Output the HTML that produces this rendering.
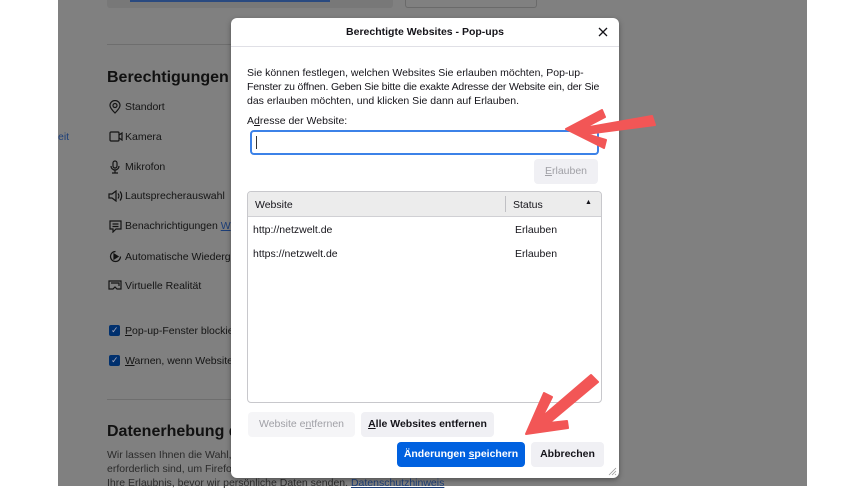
<!DOCTYPE html>
<html><head><meta charset="utf-8"><style>
*{margin:0;padding:0;box-sizing:border-box}
body{width:864px;height:486px;overflow:hidden;background:#fff;font-family:"Liberation Sans",sans-serif;position:relative}
.a{position:absolute;white-space:nowrap}
#bg{position:absolute;left:58px;top:0;width:749px;height:486px;background:#808080}
.t{color:#141414;font-size:10.5px}
.dlg{position:absolute;left:231px;top:18px;width:388px;height:460px;background:#fff;border-radius:6px;box-shadow:0 2px 6px rgba(0,0,0,.35)}
.d{color:#15141a;font-size:10.5px}
.btn{position:absolute;height:25px;border-radius:4px;background:#f0f0f4;font-size:10.5px;text-align:center;line-height:25px;font-weight:bold;color:#15141a}
svg.i{position:absolute}
</style></head><body>
<div id="bg"></div>
<div class="a" style="left:107px;top:0;width:286px;height:8px;background:#787878;border-radius:0 0 3px 3px"></div>
<div class="a" style="left:130px;top:0;width:200px;height:2px;background:#2a4a80"></div>
<div class="a" style="left:405px;top:0;width:132px;height:8px;border:1px solid #6a6a6a;border-top:none;border-radius:0 0 3px 3px"></div>
<div class="a" style="left:107px;top:44px;width:124px;height:1px;background:#6e6e6e"></div>
<div class="a" style="left:107px;top:69px;font-size:16px;font-weight:bold;color:#111">Berechtigungen</div>
<div class="a" style="left:58px;top:131px;font-size:10.5px;color:#1c3e78">eit</div>
<svg class="i" style="left:109px;top:100px" width="12" height="14" viewBox="0 0 12 14" fill="none" stroke="#141414" stroke-width="1.2"><path d="M6 13C2 9 1 7 1 5.5a5 5 0 0110 0C11 7 10 9 6 13z"/><circle cx="6" cy="5.5" r="2"/></svg>
<div class="a t" style="left:125px;top:101px">Standort</div>
<svg class="i" style="left:109px;top:131px" width="14" height="11" viewBox="0 0 14 11" fill="none" stroke="#141414" stroke-width="1.2"><rect x="1" y="1" width="9" height="9" rx="1"/><path d="M10 4l3-2v7l-3-2"/></svg>
<div class="a t" style="left:125px;top:131px">Kamera</div>
<svg class="i" style="left:110px;top:160px" width="10" height="14" viewBox="0 0 10 14" fill="none" stroke="#141414" stroke-width="1.2"><rect x="3" y="1" width="4" height="7" rx="2"/><path d="M1 6a4 4 0 008 0M5 10v3M2 13h6"/></svg>
<div class="a t" style="left:125px;top:161px">Mikrofon</div>
<svg class="i" style="left:108px;top:190px" width="15" height="12" viewBox="0 0 15 12" fill="none" stroke="#141414" stroke-width="1.2"><path d="M1 4h3l4-3v10l-4-3H1z"/><path d="M10 3.5a4 4 0 010 5M12 1.5a7 7 0 010 9"/></svg>
<div class="a t" style="left:125px;top:190px">Lautsprecherauswahl</div>
<svg class="i" style="left:109px;top:220px" width="13" height="13" viewBox="0 0 13 13" fill="none" stroke="#141414" stroke-width="1.2"><path d="M1 1h11v8H7l-3 3V9H1z"/><path d="M3.5 4h6M3.5 6.5h6"/></svg>
<div class="a t" style="left:125px;top:220px">Benachrichtigungen <span style="color:#1c3e78;text-decoration:underline">W</span></div>
<svg class="i" style="left:109px;top:250px" width="13" height="13" viewBox="0 0 13 13" fill="none" stroke="#141414" stroke-width="1.2"><path d="M11.5 6.5A5 5 0 116.5 1.5"/><path d="M5 4l4 2.5L5 9z" fill="#141414"/></svg>
<div class="a t" style="left:125px;top:251px">Automatische Wiederg</div>
<svg class="i" style="left:108px;top:280px" width="14" height="11" viewBox="0 0 14 11" fill="none" stroke="#141414" stroke-width="1.2"><path d="M1 1h12v8H9l-2-2-2 2H1z"/><path d="M3 3h8v3"/></svg>
<div class="a t" style="left:125px;top:280px">Virtuelle Realität</div>
<div class="a" style="left:109px;top:325px;width:11px;height:11px;background:#00306e;border-radius:2px"></div>
<div class="a" style="left:111px;top:325px;color:#aab;font-size:9px">✓</div>
<div class="a t" style="left:125px;top:325px"><u>P</u>op-up-Fenster blockie</div>
<div class="a" style="left:109px;top:355px;width:11px;height:11px;background:#00306e;border-radius:2px"></div>
<div class="a" style="left:111px;top:355px;color:#aab;font-size:9px">✓</div>
<div class="a t" style="left:125px;top:355px"><u>W</u>arnen, wenn Website</div>
<div class="a" style="left:107px;top:399px;width:124px;height:1px;background:#6e6e6e"></div>
<div class="a" style="left:107px;top:423px;font-size:16px;font-weight:bold;color:#111">Datenerhebung du</div>
<div class="a t" style="left:107px;top:449px;color:#2a2a2a">Wir lassen Ihnen die Wahl,</div>
<div class="a t" style="left:107px;top:463px;color:#2a2a2a">erforderlich sind, um Firefo</div>
<div class="a t" style="left:107px;top:477px;color:#2a2a2a">Ihre Erlaubnis, bevor wir persönliche Daten senden. <span style="color:#1c3e78;text-decoration:underline">Datenschutzhinweis</span></div>

<div class="dlg">
  <div class="a" style="left:0;width:388px;text-align:center;top:8px;font-size:10.5px;font-weight:bold;color:#15141a">Berechtigte Websites - Pop-ups</div>
  <svg class="i" style="left:367px;top:9px" width="10" height="10" viewBox="0 0 10 10" stroke="#15141a" stroke-width="1.3"><path d="M1 1l8 8M9 1L1 9"/></svg>
  <div class="a" style="left:0;top:28px;width:388px;height:1px;background:#e0e0e6"></div>
  <div class="a d" style="left:16px;top:48px;line-height:14px">Sie können festlegen, welchen Websites Sie erlauben möchten, Pop-up-<br><span style="letter-spacing:-0.18px">Fenster zu öffnen. Geben Sie bitte die exakte Adresse der Website ein, der Sie</span><br>das erlauben möchten, und klicken Sie dann auf Erlauben.</div>
  <div class="a d" style="left:16px;top:97px">A<u>d</u>resse der Website:</div>
  <div class="a" style="left:19px;top:112px;width:349px;height:25px;border:2px solid #3c82e8;border-radius:4px"></div>
  <div class="a" style="left:25px;top:118px;width:1px;height:13px;background:#333"></div>
  <div class="btn" style="left:303px;top:141px;width:64px;color:#a0a0a6;font-weight:normal"><u>E</u>rlauben</div>
  <div class="a" style="left:16px;top:173px;width:355px;height:212px;border:1px solid #c8c8cc;border-radius:4px;overflow:hidden">
    <div class="a" style="left:0;top:0;width:355px;height:25px;background:#ececec;border-bottom:1px solid #d0d0d4"></div>
    <div class="a" style="left:257px;top:4px;width:1px;height:16px;background:#c0c0c4"></div>
    <div class="a d" style="left:7px;top:7px">Website</div>
    <div class="a d" style="left:265px;top:7px">Status</div>
    <div class="a" style="left:337px;top:7px;font-size:7px;color:#15141a">▲</div>
    <div class="a d" style="left:5px;top:32px">http://netzwelt.de</div>
    <div class="a d" style="left:267px;top:32px">Erlauben</div>
    <div class="a d" style="left:5px;top:56px">https://netzwelt.de</div>
    <div class="a d" style="left:267px;top:56px">Erlauben</div>
  </div>
  <div class="btn" style="left:17px;top:394px;width:107px;color:#a0a0a6;font-weight:normal;background:#f5f5f7">Website e<u>n</u>tfernen</div>
  <div class="btn" style="left:130px;top:394px;width:133px"><u>A</u>lle Websites entfernen</div>
  <div class="btn" style="left:166px;top:424px;width:128px;background:#0061e0;color:#fff">Änderungen <u>s</u>peichern</div>
  <div class="btn" style="left:300px;top:424px;width:73px">Abbrechen</div>
  <svg class="i" style="left:376px;top:448px" width="10" height="10" stroke="#999" stroke-width="0.8"><path d="M9 2L2 9M9 5L5 9M9 8L8 9"/></svg>
</div>

<svg class="i" style="left:0;top:0" width="864" height="486" fill="#f25656" stroke="#f25656" stroke-width="2" stroke-linejoin="round">
<path d="M566 129 L602 110 L605 117 L584 128 L652 116 L655 125 L586 134 L606 140 L604 148 Z"/>
<path d="M526 434 L544 393 L552 397 L542 417 L591 375 L598 382 L549 423 L567 421 L568 428 Z"/>
</svg>
</body></html>
